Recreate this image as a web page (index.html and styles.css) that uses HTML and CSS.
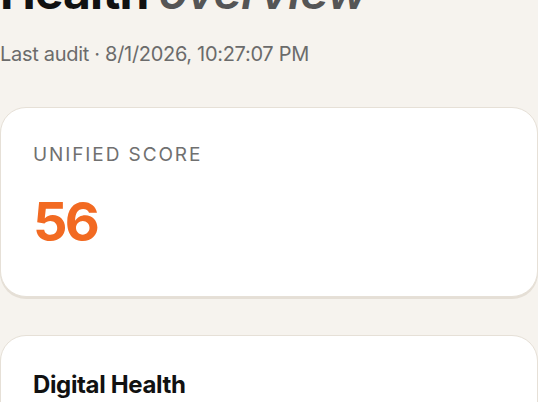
FILE: index.html
```html
<!DOCTYPE html>
<html lang="en">
<head>
<meta charset="utf-8">
<title>Health overview</title>
<link rel="stylesheet" href="styles.css">
</head>
<body>
<main class="page">
  <header class="head">
    <h1 class="title">Health <em class="title-em">overview</em></h1>
    <p class="meta">Last audit · 8/1/2026, 10:27:07 PM</p>
  </header>
  <section class="card score-card">
    <div class="label">Unified score</div>
    <div class="score">56</div>
  </section>
  <section class="card section-card">
    <h2 class="section-title">Digital Health</h2>
  </section>
</main>
</body>
</html>
```

FILE: styles.css
```css
* { box-sizing: border-box; }
html, body {
  margin: 0;
  padding: 0;
  background: #f6f3ee;
  font-family: Inter, "Noto Sans", sans-serif;
  color: #111;
}
.page {
  display: flex;
  flex-direction: column;
}
.head {
  margin-top: -34px;
}
.title {
  margin: 0;
  font-size: 48px;
  line-height: 1.1;
  font-weight: 700;
  letter-spacing: -0.02em;
  color: #111;
}
.title-em {
  font-style: italic;
  font-weight: 600;
  letter-spacing: -0.01em;
  color: #555;
}
.meta {
  margin: 21px 0 0;
  font-size: 20px;
  line-height: 1.4;
  color: #6b6b6b;
  letter-spacing: -0.015em;
}
.card {
  background: #fff;
  border: 1.5px solid #e6e0d7;
  border-radius: 26px;
  box-shadow: 0 2px 0 #e5dfd6;
  padding: 34px 32px;
}
.score-card {
  margin-top: 39px;
  height: 190px;
}
.label {
  font-size: 19px;
  line-height: 1.4;
  letter-spacing: 0.1em;
  text-transform: uppercase;
  color: #707070;
}
.score {
  margin-top: 24px;
  font-size: 54px;
  line-height: 1.1;
  font-weight: 700;
  letter-spacing: -0.05em;
  color: #f26a22;
}
.section-card {
  margin-top: 38px;
  padding-top: 33px;
}
.section-title {
  margin: 0;
  font-size: 24px;
  line-height: 1.3;
  font-weight: 700;
  letter-spacing: -0.015em;
  color: #111;
}
```
